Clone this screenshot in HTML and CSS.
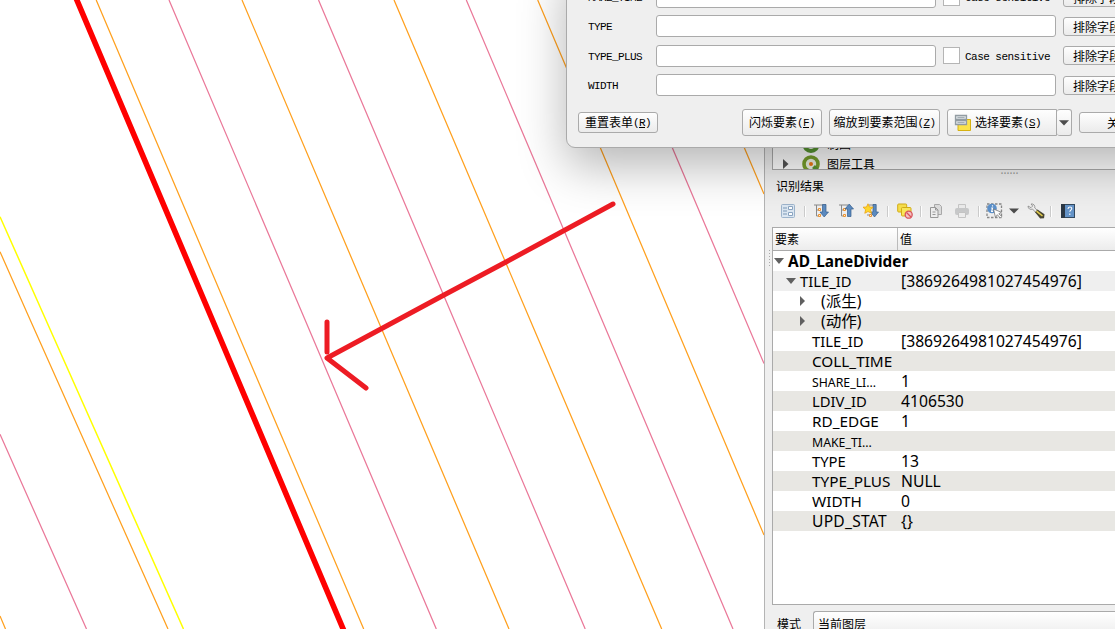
FILE: index.html
```
<!DOCTYPE html>
<html lang="zh-CN">
<head>
<meta charset="utf-8">
<title>AD_LaneDivider</title>
<link rel="stylesheet" href="styles.css">
</head>
<body>
<div class="app">
  <main class="map">
    <svg width="764" height="629" viewBox="0 0 764 629" fill="none">
      <g stroke="#ffa01e" stroke-width="1.25">
        <path d="M96.2 0L230 315 363.7 629M242 0L375.7 315 509 629M394 0L528 315 661.7 629M537.7 0L600 147 764 535M681.8 0L744 147 764 194M0 251.7L28 315 168 629M0 616L5.5 629"/>
      </g>
      <g stroke="#ea7899" stroke-width="1.25">
        <path d="M169 0L303 315 436.3 629M318.5 0L452 315 585.2 629M466.3 0L525.7 140 733 629M609.7 0L672 147 764 363.5M0 434.3L86.5 629"/>
      </g>
      <path d="M0 216.7L43.7 315 183.5 629" stroke="#ffff00" stroke-width="1.5"/>
      <path d="M76 -2L210.3 315 344 631" stroke="#ff0000" stroke-width="5.6"/>
      <path d="M613 204L506 262 444 295 327 358L366 388M327 322V352" stroke="#ed1c24" stroke-width="5" stroke-linecap="round" stroke-linejoin="round"/>
    </svg>
  </main>
  <aside class="dock">
    <div class="toolbox">
      <div class="tool-row">
        <svg class="twist" width="8" height="10"></svg>
        <svg width="20" height="20" viewBox="0 0 20 20"><circle cx="10" cy="10" r="7" fill="none" stroke="#589632" stroke-width="4"/></svg>
        <span>制图</span>
      </div>
      <div class="tool-row">
        <svg class="twist" width="8" height="10" viewBox="0 0 8 10"><path d="M0 0L5.500 5 0 10z" fill="#555"/></svg>
        <svg width="20" height="20" viewBox="0 0 20 20"><circle cx="10" cy="10" r="7" fill="#eef3e4" stroke="#78a02c" stroke-width="3.6"/><path d="M12.500 12.500l4.500 4.500" stroke="#589632" stroke-width="4"/><circle cx="10" cy="10" r="2" fill="#ee7913"/></svg>
        <span>图层工具</span>
      </div>
    </div>
    <div class="grip">······</div>
    <div class="dock-title">识别结果</div>
    <div class="toolbar">
      <svg class="i-form" width="16" height="16" viewBox="0 0 16 16"><rect x="1.5" y="1.5" width="13" height="13" rx="1" fill="#dce7f2" stroke="#9db4cc"/><path d="M3 5h4M3 8h4M3 11h4" stroke="#7d99b7"/><path d="M8.5 3.5h4v3h-4zM8.5 9.5h4v3h-4z" fill="#fff" stroke="#8ba5c1"/></svg>
      <i class="sep"></i>
      <svg class="i-expand" width="16" height="16" viewBox="0 0 16 16"><path d="M1 2h12M3.5 2v11M3.5 7H7M3.5 13H7" stroke="#8b8b8b" fill="none"/><path d="M5.5 5.5h2v2h-2zM5.5 11.5h2v2h-2z" fill="#fff3d7" stroke="#ed9330"/><path d="M9.500 1.500h3.500V9h2.500L11.200 14 7 9h2.500z" fill="#5c8bc0" stroke="#365f8c" stroke-width=".7"/></svg>
      <svg class="i-collapse" width="16" height="16" viewBox="0 0 16 16"><path d="M1 2h9M3.5 2v11M3.5 7H7M3.5 13H7" stroke="#8b8b8b" fill="none"/><path d="M5.5 5.5h2v2h-2zM5.5 11.5h2v2h-2z" fill="#fff3d7" stroke="#ed9330"/><path d="M9.500 13.500h3.500V6h2.500L11.200 1 7 6h2.500z" fill="#5c8bc0" stroke="#365f8c" stroke-width=".7"/></svg>
      <svg class="i-new" width="16" height="16" viewBox="0 0 16 16"><path d="M6 2h7M4 12h4" stroke="#8b8b8b"/><path d="M6.5 11.5h2v2h-2z" fill="#fff3d7" stroke="#ed9330"/><path d="M10 1.500h3.200V9h2.300l-4 5L7.500 9H10z" fill="#5c8bc0" stroke="#365f8c" stroke-width=".7"/><path d="M5 .8l1.500 3.200 3.600.2-2.600 2.500 1 3.600L5 8.500 1.800 10.300l.8-3.600L0 4.200 3.500 4z" fill="#ffd92e" stroke="#eda310" stroke-width=".8"/></svg>
      <i class="sep"></i>
      <svg class="i-clear" width="16" height="16" viewBox="0 0 16 16"><rect x=".7" y="1" width="9" height="8" rx="1" fill="#f7df4c" stroke="#d3ad18"/><rect x="4.500" y="4.500" width="9.500" height="8.500" rx="1" fill="#fae85a" stroke="#d3ad18"/><circle cx="11.700" cy="11.700" r="3.500" fill="#f4c4c4" stroke="#d9545c" stroke-width="1.300"/><path d="M9.500 9.500l4.500 4.500" stroke="#d9545c" stroke-width="1.300"/></svg>
      <i class="sep"></i>
      <svg class="i-copy" width="16" height="16" viewBox="0 0 16 16"><path d="M6.500 1.500h5l2 2v8h-7z" fill="#ddd" stroke="#aaa"/><path d="M2.500 4.500h5l2.500 2.500v7.500H2.500z" fill="#eee" stroke="#999"/><path d="M7.500 4.500V7H10M4.500 9h3M4.500 11.500h3" stroke="#999" fill="none"/></svg>
      <svg class="i-print" width="16" height="16" viewBox="0 0 16 16"><path d="M4.500 6V1.500h7V6" fill="#ebebeb" stroke="#c7c7c7"/><rect x="1" y="5" width="14" height="7" rx="2" fill="#c8c9ca"/><path d="M4.500 9.500h7v5h-7z" fill="#ededed" stroke="#c4c4c4"/></svg>
      <i class="sep"></i>
      <svg class="i-identify" width="17" height="16" viewBox="0 0 17 16"><path d="M1 1h14.500v13.500H1z" fill="none" stroke="#888" stroke-width="1.300" stroke-dasharray="2.500 1.500"/><circle cx="6" cy="5.500" r="4.800" fill="#5c91cb"/><path d="M6.500 2.200v1.300M5.200 5h1.300L5.700 8.500h1.300" stroke="#fff" stroke-width="1.200" fill="none"/><path d="M7.500 6l2 8.500 1.800-2.800 3 3.300 1.500-1.500-3-2.700 2.600-1.500z" fill="#fff" stroke="#777" stroke-width=".8"/></svg>
      <svg class="i-drop" width="10" height="6" viewBox="0 0 10 6"><path d="M0 .5h10L5 5.500z" fill="#4d4d4d"/></svg>
      <svg class="i-wrench" width="18" height="16" viewBox="0 0 18 16"><path d="M1 3c0 3 2.500 4 4.500 3L9 9.800l2-2L7.800 5C8.300 2.500 6.500.5 4 1l1.700 2L4 4.700z" fill="#eee" stroke="#888" stroke-width=".8"/><path d="M8 9.300l2.500-2.800 7 4.800-.5 4-3.800.2z" fill="#4a4734"/><path d="M9.500 8.200l6 4.800" stroke="#e3cd4c" stroke-width="1.600"/></svg>
      <i class="sep"></i>
      <svg class="i-help" width="16" height="16" viewBox="0 0 16 16"><rect x="1.500" y="1.500" width="13" height="13" fill="#6594c8" stroke="#33495f"/><path d="M1 1h4v14H1z" fill="#2c3845"/><path d="M8 6c0-2.600 3.800-2.600 3.700-.3-.1 1.300-1.900 1.500-1.900 3.100M9.800 10.500V12" stroke="#fff" stroke-width="1.100" fill="none"/></svg>
    </div>
    <div class="tree">
      <div class="thead"><span>要素</span><span>值</span></div>
      <div class="row layer"><i class="open"></i><b>AD_LaneDivider</b></div>
      <div class="row feature"><i class="open"></i><span class="key">TILE_ID</span><span class="val id">[3869264981027454976]</span></div>
      <div class="row group"><i class="closed"></i><span class="key">(派生)</span></div>
      <div class="row group alt"><i class="closed"></i><span class="key">(动作)</span></div>
      <div class="row"><span class="key">TILE_ID</span><span class="val id">[3869264981027454976]</span></div>
      <div class="row alt"><span class="key wide">COLL_TIME</span><span class="val"></span></div>
      <div class="row"><span class="key small">SHARE_LI...</span><span class="val">1</span></div>
      <div class="row alt"><span class="key">LDIV_ID</span><span class="val">4106530</span></div>
      <div class="row"><span class="key wide">RD_EDGE</span><span class="val">1</span></div>
      <div class="row alt"><span class="key small">MAKE_TI...</span><span class="val"></span></div>
      <div class="row"><span class="key">TYPE</span><span class="val">13</span></div>
      <div class="row alt"><span class="key wide">TYPE_PLUS</span><span class="val">NULL</span></div>
      <div class="row"><span class="key wide">WIDTH</span><span class="val">0</span></div>
      <div class="row alt"><span class="key stat">UPD_STAT</span><span class="val">{}</span></div>
    </div>
    <div class="mode"><span>模式</span><div class="combo">当前图层</div></div>
  </aside>
  <i class="vgrip"></i>

  <section class="dialog">
    <div class="fields">
      <div class="field"><label>MAKE_TIME</label><div class="input short"></div><i class="check"></i><span class="cs">Case sensitive</span><div class="btn exclude">排除字段</div></div>
      <div class="field"><label>TYPE</label><div class="input"></div><div class="btn exclude">排除字段</div></div>
      <div class="field"><label>TYPE_PLUS</label><div class="input short"></div><i class="check"></i><span class="cs">Case sensitive</span><div class="btn exclude">排除字段</div></div>
      <div class="field"><label>WIDTH</label><div class="input"></div><div class="btn exclude">排除字段</div></div>
    </div>
    <div class="actions">
      <div class="btn reset"><span>重置表单<span class="m">(<u>R</u>)</span></span></div>
      <div class="btn flash"><span>闪烁要素<span class="m">(<u>F</u>)</span></span></div>
      <div class="btn zoom"><span>缩放到要素范围<span class="m">(<u>Z</u>)</span></span></div>
      <div class="btn select">
        <svg width="18" height="18" viewBox="0 0 18 18"><path d="M4 5.500h12.500v11H4z" fill="#fbe34a" stroke="#d6b112"/><path d="M1.500 1.500h11v4h-11zM1.500 6.500h11v4h-11z" fill="#dce2e5" stroke="#929ca2" stroke-width="1.300"/><path d="M3.500 3.500h7M3.500 8.500h7" stroke="#a5afb5"/></svg>
        <span>选择要素<span class="m">(<u>S</u>)</span></span>
      </div>
      <div class="btn arrow"><svg width="10" height="6" viewBox="0 0 10 6"><path d="M0 .3h10L5 5.500z" fill="#4d4d4d"/></svg></div>
      <div class="btn close">关闭</div>
    </div>
  </section>
</div>
</body>
</html>
```
FILE: styles.css
```
* { box-sizing: border-box; }
body {
  margin: 0;
  overflow: hidden;
  font: 12px/14px "Noto Sans CJK SC", sans-serif;
  color: #000;
}
svg { display: block; flex: none; }
.app {
  position: relative;
  display: flex;
  width: 1115px;
  height: 629px;
  overflow: hidden;
  background: #fff;
}
.map { width: 764px; flex: none; }

.dock {
  width: 351px;
  height: 629px;
  padding-left: 7px;
  border-left: 1px solid #b4b4b4;
  background: #efefef;
  overflow: hidden;
}
.toolbox {
  height: 170px;
  padding: 134px 0 0 10px;
  border: solid #aaa;
  border-width: 0 0 1px 1px;
  background: #fff;
  overflow: hidden;
}
.tool-row { display: flex; align-items: center; height: 20px; }
.tool-row span { margin-left: 6px; }
.tool-row svg + svg { margin-left: 10px; }
.grip {
  height: 6px;
  padding-left: 227px;
  font: 10px/7px "Liberation Mono", monospace;
  letter-spacing: -3px;
  color: #999;
}
.dock-title { height: 24px; padding: 3px 0 0 4px; }

.toolbar { display: flex; align-items: center; height: 27px; padding: 0 0 5px 8px; }
.sep { width: 2px; height: 11px; margin-left: 8px; flex: none; border-left: 1px solid #ccc; border-right: 1px solid #fff; }
.i-expand { margin-left: 7px; }
.i-collapse, .i-new { margin-left: 9px; }
.i-clear, .i-help, .i-wrench { margin-left: 8px; }
.i-clear + .sep { margin-left: 7px; }
.i-copy, .i-identify, .i-drop { margin-left: 6px; }
.i-print { margin-left: 10px; }
.i-wrench + .sep { margin-left: 5px; }

.tree {
  height: 378px;
  border: solid #aaa;
  border-width: 1px 0 1px 1px;
  background: #fff;
  font: 15.7px/20px "Noto Sans", "Noto Sans CJK SC", sans-serif;
}
.thead {
  display: grid;
  grid-template-columns: 124px 1fr;
  height: 23px;
  border-bottom: 1px solid #aaa;
  background: linear-gradient(#fff, #ececec);
  font: 12px/22px "Noto Sans CJK SC", sans-serif;
}
.thead span { padding-left: 2px; }
.thead span + span { border-left: 1px solid #bbb; }
.row { display: flex; height: 20px; padding-left: 39px; line-height: 21px; white-space: nowrap; }
.alt { background: #e8e7e3; }
.key { width: 89px; flex: none; font-size: 14.8px; }
.wide { font-size: 15.3px; }
.stat { font-size: 15.6px; letter-spacing: .25px; }
.small { font-size: 12.3px; line-height: 23px; }
.val { font-size: 15.7px; }
.row i { flex: none; width: 10px; height: 6px; background: #606060; }
.open { margin-top: 7px; clip-path: polygon(0 0, 100% 0, 50% 100%); }
.row .closed { width: 5px; height: 10px; margin: 5px 0 0; clip-path: polygon(0 0, 100% 50%, 0 100%); }
.layer { padding-left: 1px; }
.layer b { margin-left: 4px; font-size: 15.4px; }
.feature { padding-left: 13px; background: #efefef; }
.feature .key { width: 101px; margin-left: 4px; }
.group { padding-left: 27px; }
.group .key { margin-left: 16px; font-size: 15.6px; }

.mode { display: flex; padding: 6px 0 0 5px; }
.mode > span { width: 36px; padding-top: 6px; }
.combo {
  flex: 1;
  height: 27px;
  padding: 5px 4px;
  border: 1px solid #aaa;
  border-right: 0;
  border-radius: 3px 0 0 3px;
  background: linear-gradient(#fff, #ececec);
}
.vgrip {
  position: absolute;
  left: 769px;
  top: 250px;
  width: 1px;
  height: 17px;
  background: repeating-linear-gradient(#aaa 0 1px, transparent 1px 3px);
}

.dialog {
  position: absolute;
  left: 566px;
  top: -40px;
  width: 620px;
  height: 188px;
  padding-top: 25px;
  border: 1px solid #aaa;
  border-radius: 9px;
  background: #efefef;
  box-shadow: 0 18px 48px rgba(0, 0, 0, .29);
}
.fields { display: grid; grid-template-rows: 22px 22px 22px 22px; row-gap: 7.4px; }
.field { display: flex; align-items: center; padding-left: 21px; }
.field label { width: 68px; flex: none; padding-top: 2px; }
label, .cs, .m { font-family: "Liberation Mono", monospace; font-size: 11px; letter-spacing: -.6px; }
.input { width: 400px; height: 22px; flex: none; border: 1px solid #aaa; border-radius: 3px; background: #fff; }
.short { width: 280px; }
.check { width: 17px; height: 17px; margin-left: 7px; border: 1px solid #b5b5b5; background: #fff; }
.cs { width: 91px; margin-left: 5px; padding-top: 2px; letter-spacing: -.53px; }
.btn {
  display: flex;
  align-items: center;
  justify-content: center;
  flex: none;
  height: 27px;
  border: 1px solid #aaa;
  border-radius: 3px;
  background: linear-gradient(#fefefe, #ebebeb);
  white-space: nowrap;
}
.exclude { width: 80px; height: 19px; margin-left: 7px; padding: 1px 0 0 9px; justify-content: flex-start; }
.actions { display: flex; align-items: center; padding: 13px 0 0 11px; }
.actions .btn { padding-top: 1px; }
.m { position: relative; top: -1px; }
.reset { width: 80px; height: 21px; margin-right: 84px; }
.flash { width: 80px; margin-right: 7px; }
.zoom { width: 111px; margin-right: 7px; }
.select { width: 110px; padding-left: 6px; justify-content: flex-start; gap: 3px; border-radius: 3px 0 0 3px; }
.arrow { width: 15px; margin-right: 7px; border-left: 0; }
.close { width: 80px; height: 21px; }
```
